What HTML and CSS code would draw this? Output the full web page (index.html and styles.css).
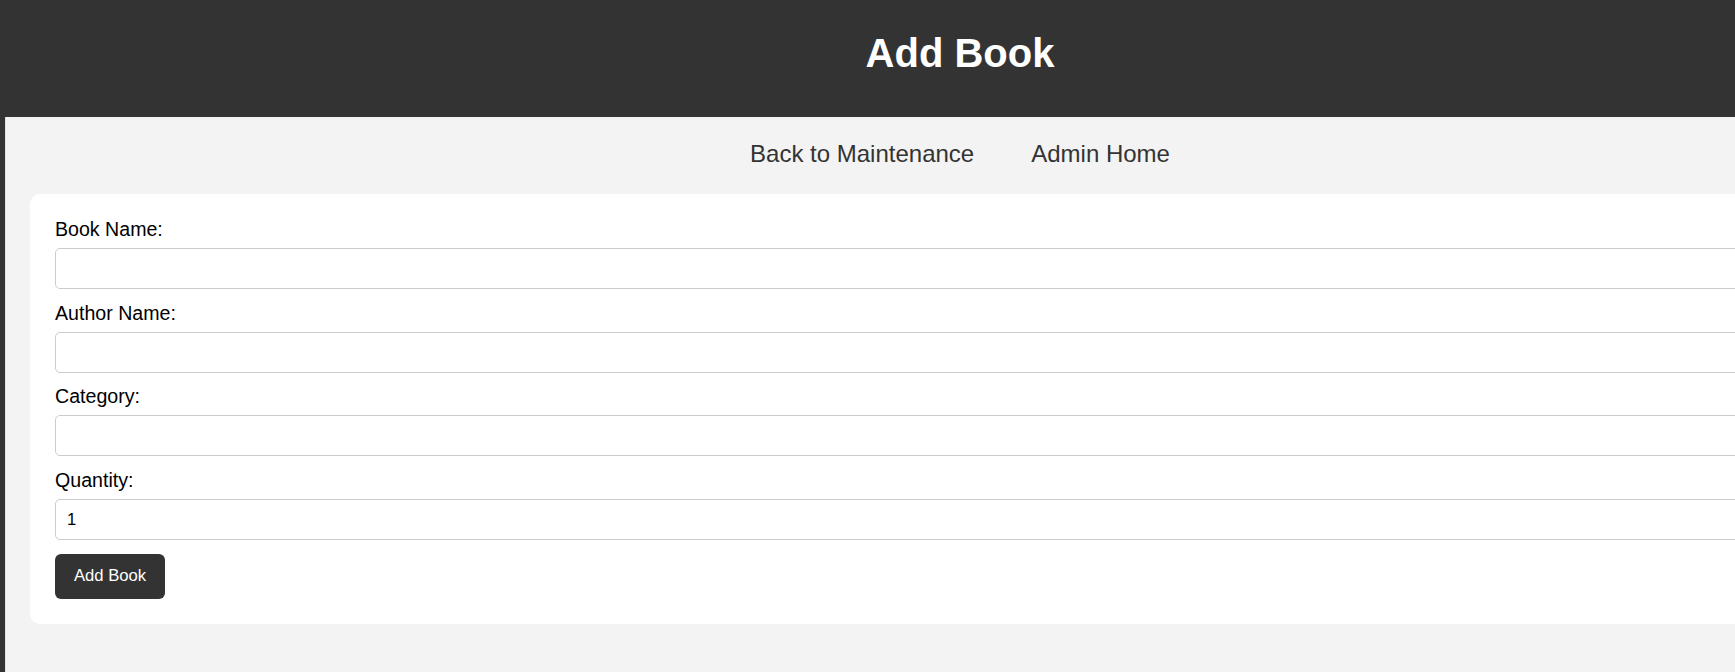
FILE: index.html
```html
<!DOCTYPE html>
<html lang="en">
<head>
<meta charset="utf-8">
<title>Add Book</title>
<link rel="stylesheet" href="styles.css">
</head>
<body>
<div class="page">
  <header class="site-header">
    <h1 class="title">Add Book</h1>
  </header>
  <nav class="nav">
    <a href="#" class="nav-link">Back to Maintenance</a>
    <a href="#" class="nav-link">Admin Home</a>
  </nav>
  <main class="card">
    <form class="form">
      <label class="label" for="book">Book Name:</label>
      <input class="input" id="book" type="text">
      <label class="label" for="author">Author Name:</label>
      <input class="input" id="author" type="text">
      <label class="label" for="category">Category:</label>
      <input class="input" id="category" type="text">
      <label class="label" for="qty">Quantity:</label>
      <input class="input" id="qty" type="text" value="1">
      <button class="btn" type="button">Add Book</button>
    </form>
  </main>
</div>
</body>
</html>
```
FILE: styles.css
```css
html, body {
  margin: 0;
  padding: 0;
  height: 100%;
  overflow: hidden;
}
body {
  background: #333333;
  font-family: "Liberation Sans", Arial, sans-serif;
}
.page {
  margin-left: 5px;
  width: 1910px;
  min-height: 100%;
  background: #f3f3f3;
  box-shadow: inset 1px 0 0 #e2e2e2;
}
.site-header {
  background: #333333;
  margin-left: -5px;
  padding: 30px 0 41px 5px;
}
.title {
  margin: 0;
  text-align: center;
  color: #ffffff;
  font-size: 40px;
  line-height: 46px;
  font-weight: bold;
}
.nav {
  display: flex;
  justify-content: center;
  gap: 57px;
  padding: 23px 0 26px;
  line-height: 28px;
}
.nav-link {
  color: #333333;
  text-decoration: none;
  font-size: 24px;
}
.card {
  display: block;
  margin: 0 25px;
  padding: 25px;
  background: #ffffff;
  border-radius: 10px;
}
.form {
  display: flex;
  flex-direction: column;
  align-items: stretch;
}
.label {
  display: block;
  font-size: 19.6px;
  line-height: 21px;
  margin-bottom: 8px;
  color: #000000;
}
.input {
  box-sizing: border-box;
  height: 41px;
  margin: 0 0 13.7px;
  padding: 0 11px;
  border: 1px solid #cccccc;
  border-radius: 5px;
  font-family: "Liberation Sans", Arial, sans-serif;
  font-size: 16.67px;
  color: #000000;
  background: #ffffff;
  outline: none;
}
.btn {
  align-self: flex-start;
  width: 110px;
  height: 45px;
  padding: 0;
  border: none;
  border-radius: 6px;
  background: #333333;
  color: #ffffff;
  font-family: "Liberation Sans", Arial, sans-serif;
  font-size: 16.67px;
}
```
